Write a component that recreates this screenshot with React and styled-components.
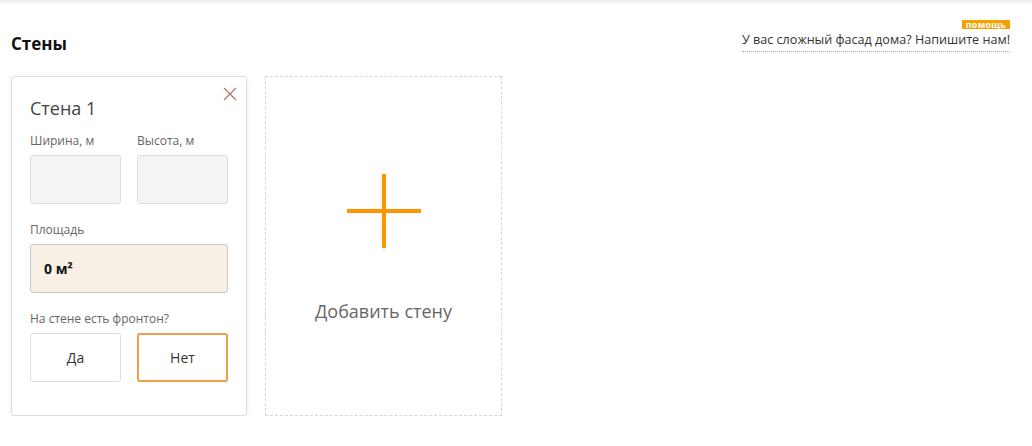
import React from "react";
import styled, { createGlobalStyle } from "styled-components";

const Global = createGlobalStyle`
  html, body { margin: 0; padding: 0; background: #fff; }
  body { font-family: "Open Sans", "Liberation Sans", sans-serif; color: #333; }
  * { box-sizing: border-box; }
`;

const TopShadow = styled.div`
  height: 6px;
  background: linear-gradient(#ececec, #fff);
`;

const Page = styled.div`
  padding: 0 22px 0 11px;
`;

const Header = styled.div`
  display: flex;
  justify-content: space-between;
  align-items: flex-end;
  height: 50px;
`;

const Title = styled.h2`
  margin: 0;
  font-size: 17px;
  font-weight: 700;
  color: #111;
  line-height: 24px;
`;

const Help = styled.a`
  position: relative;
  font-size: 12.6px;
  color: #333;
  text-decoration: none;
  line-height: 18px;
  border-bottom: 1px dotted #aaa;
  padding-bottom: 2px;
  margin-bottom: 4px;
`;

const Badge = styled.span`
  position: absolute;
  right: 0;
  top: -11px;
  background: #f5a000;
  color: #fff;
  font-size: 9px;
  font-weight: 700;
  line-height: 9px;
  padding: 0 4px;
  letter-spacing: 0.2px;
`;

const Cards = styled.div`
  display: flex;
  gap: 18px;
  margin-top: 20px;
`;

const Card = styled.div`
  position: relative;
  width: 236px;
  height: 340px;
  border: 1px solid #ddd;
  border-radius: 3px;
  box-shadow: 0 1px 5px rgba(0, 0, 0, 0.07);
  padding: 19px 18px 0 18px;
`;

const Close = styled.button`
  position: absolute;
  top: 10px;
  right: 9px;
  width: 14px;
  height: 14px;
  padding: 0;
  border: 0;
  background: none;
  cursor: pointer;
  display: flex;
`;

const CardTitle = styled.div`
  font-size: 18px;
  color: #444;
  line-height: 24px;
`;

const Row = styled.div`
  display: grid;
  grid-template-columns: 91px 91px;
  gap: 16px;
  margin-top: ${(p) => p.$mt}px;
`;

const Field = styled.div`
  display: flex;
  flex-direction: column;
`;

const Label = styled.div`
  font-size: 12px;
  color: #666;
  line-height: 16px;
  margin-bottom: ${(p) => p.$mb || 6}px;
  margin-top: ${(p) => p.$mt || 0}px;
`;

const Input = styled.div`
  height: 49px;
  background: #f4f4f4;
  border: 1px solid #ddd;
  border-radius: 3px;
`;

const Area = styled.div`
  height: 49px;
  width: 198px;
  background: #f8f0e4;
  border: 1px solid #c8c8c8;
  border-radius: 3px;
  display: flex;
  align-items: center;
  padding-left: 13px;
  font-size: 14px;
  font-weight: 700;
  color: #111;
`;

const Choice = styled.button`
  height: 49px;
  background: #fff;
  border: ${(p) => (p.$active ? "2px solid #f39c4c" : "1px solid #ddd")};
  border-radius: 3px;
  font-family: inherit;
  font-size: 14px;
  color: #333;
  cursor: pointer;
`;

const AddCard = styled.div`
  width: 237px;
  height: 340px;
  border: 1px dashed #d6d6d6;
  display: flex;
  flex-direction: column;
  align-items: center;
  padding-top: 97px;
  cursor: pointer;
`;

const AddText = styled.div`
  margin-top: 51px;
  font-size: 18px;
  color: #666;
  line-height: 24px;
`;

export default function App() {
  return (
    <>
      <Global />
      <TopShadow />
      <Page>
        <Header>
          <Title>Стены</Title>
          <Help href="#">
            <Badge>помощь</Badge>
            У вас сложный фасад дома? Напишите нам!
          </Help>
        </Header>
        <Cards>
          <Card>
            <Close aria-label="Удалить">
              <svg width="14" height="14" viewBox="0 0 14 14">
                <path d="M1 1L13 13M13 1L1 13" stroke="#a07a6a" strokeWidth="1.2" />
              </svg>
            </Close>
            <CardTitle>Стена 1</CardTitle>
            <Row $mt={13}>
              <Field>
                <Label>Ширина, м</Label>
                <Input />
              </Field>
              <Field>
                <Label>Высота, м</Label>
                <Input />
              </Field>
            </Row>
            <Label $mt={18} $mb={6}>Площадь</Label>
            <Area>0 м²</Area>
            <Label $mt={18} $mb={6}>На стене есть фронтон?</Label>
            <Row $mt={0}>
              <Choice>Да</Choice>
              <Choice $active>Нет</Choice>
            </Row>
          </Card>
          <AddCard>
            <svg width="74" height="74" viewBox="0 0 74 74">
              <path d="M37 0V74M0 37H74" stroke="#ff9400" strokeWidth="4" />
            </svg>
            <AddText>Добавить стену</AddText>
          </AddCard>
        </Cards>
      </Page>
    </>
  );
}
